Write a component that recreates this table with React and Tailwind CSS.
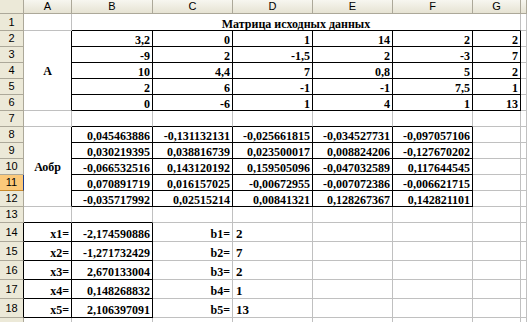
import React from "react";

const matrix = [
  ["3,2", "0", "1", "14", "2", "2"],
  ["-9", "2", "-1,5", "2", "-3", "7"],
  ["10", "4,4", "7", "0,8", "5", "2"],
  ["2", "6", "-1", "-1", "7,5", "1"],
  ["0", "-6", "1", "4", "1", "13"],
];

const inverse = [
  ["0,045463886", "-0,131132131", "-0,025661815", "-0,034527731", "-0,097057106"],
  ["0,030219395", "0,038816739", "0,023500017", "0,008824206", "-0,127670202"],
  ["-0,066532516", "0,143120192", "0,159505096", "-0,047032589", "0,117644545"],
  ["0,070891719", "0,016157025", "-0,00672955", "-0,007072386", "-0,006621715"],
  ["-0,035717992", "0,02515214", "0,00841321", "0,128267367", "0,142821101"],
];

const xs = ["-2,174590886", "-1,271732429", "2,670133004", "0,148268832", "2,106397091"];
const bs = ["2", "7", "2", "1", "13"];

const cols = ["A", "B", "C", "D", "E", "F", "G", ""];

const grid = "border-r border-b border-[#c0c0c0]";
const boxed = "border-r border-b border-black";
const num = "flex items-end justify-end pr-[2px] text-[12px] font-bold leading-none";

// row number on the left
const RowHead = ({ n, active, dark }) => (
  <div
    className={`flex items-center justify-center border-b text-[11px] leading-none ${
      active
        ? "bg-[#fbc97a] border-b-[#c98a2c] border-r border-r-[#1b3c8c]"
        : dark
        ? "bg-[#ece9d8] border-b-[#aca899] border-r border-r-black"
        : "bg-[#ece9d8] border-b-[#aca899] border-r border-r-[#aca899]"
    }`}
    style={{ fontFamily: "'Liberation Sans', Arial, sans-serif" }}
  >
    {n}
  </div>
);

const Empty = ({ className = grid }) => <div className={className} />;

export default function App() {
  return (
    <div
      className="w-[527px] h-[322px] overflow-hidden bg-white text-black"
      style={{ fontFamily: "'Liberation Serif', 'Times New Roman', serif" }}
    >
      <div className="grid grid-cols-[24px_48px_81px_80px_80px_80px_80px_48px_1fr] grid-rows-[14px_17px_repeat(12,16px)_repeat(5,19px)_16px]">
        {/* column headers */}
        <div className="bg-[#ece9d8] border-r border-b border-[#aca899]" />
        {cols.map((c, i) => (
          <div
            key={i}
            className="flex items-center justify-center bg-gradient-to-b from-[#f7f6f0] to-[#e6e3d3] border-r border-b border-[#aca899] text-[11px] leading-none"
            style={{ fontFamily: "'Liberation Sans', Arial, sans-serif" }}
          >
            {c}
          </div>
        ))}

        {/* row 1 */}
        <RowHead n={1} />
        <Empty />
        <div className="col-span-6 flex items-end justify-center border-r border-r-[#c0c0c0] border-b border-b-black text-[12px] font-bold leading-none">
          Матрица исходных данных
        </div>
        <Empty />

        {/* rows 2-6 : matrix A */}
        {matrix.map((row, r) => (
          <React.Fragment key={r}>
            <RowHead n={r + 2} />
            {r === 0 && (
              <div className="row-span-5 flex items-center justify-center border-r border-r-black border-b border-b-[#c0c0c0] text-[12px] font-bold leading-none">
                А
              </div>
            )}
            {row.map((v, i) => (
              <div key={i} className={`${boxed} ${num}`}>
                {v}
              </div>
            ))}
            <Empty />
          </React.Fragment>
        ))}

        {/* row 7 */}
        <RowHead n={7} />
        <Empty />
        <Empty className="border-r border-r-[#c0c0c0] border-b border-b-black" />
        <Empty className="border-r border-r-[#c0c0c0] border-b border-b-black" />
        <Empty className="border-r border-r-[#c0c0c0] border-b border-b-black" />
        <Empty className="border-r border-r-[#c0c0c0] border-b border-b-black" />
        <Empty className="border-r border-r-[#c0c0c0] border-b border-b-black" />
        <Empty />
        <Empty />

        {/* rows 8-12 : inverse */}
        {inverse.map((row, r) => (
          <React.Fragment key={r}>
            <RowHead n={r + 8} active={r === 3} />
            {r === 0 && (
              <div className="row-span-5 flex items-center justify-center border-r border-r-black border-b border-b-[#c0c0c0] text-[12px] font-bold leading-none">
                Аобр
              </div>
            )}
            {row.map((v, i) => (
              <div key={i} className={`${boxed} ${num}`}>
                {v}
              </div>
            ))}
            <Empty />
            <Empty />
          </React.Fragment>
        ))}

        {/* row 13 */}
        <RowHead n={13} />
        <Empty className="border-r border-r-[#c0c0c0] border-b border-b-black" />
        <Empty className="border-r border-r-[#c0c0c0] border-b border-b-black" />
        <Empty />
        <Empty />
        <Empty />
        <Empty />
        <Empty />
        <Empty />

        {/* rows 14-18 : solution */}
        {xs.map((x, r) => (
          <React.Fragment key={r}>
            <RowHead n={r + 14} dark />
            <div className={`${boxed} ${num} pb-px`}>x{r + 1}=</div>
            <div className={`${boxed} ${num} pb-px`}>{x}</div>
            <div className={`${grid} ${num} pb-px`}>b{r + 1}=</div>
            <div className={`${grid} flex items-end pl-[3px] pb-px text-[13px] font-bold leading-none`}>
              {bs[r]}
            </div>
            <Empty />
            <Empty />
            <Empty />
            <Empty />
          </React.Fragment>
        ))}

        {/* row 19, only its top edge shows */}
        <RowHead n="" />
        <Empty />
        <Empty />
        <Empty />
        <Empty />
        <Empty />
        <Empty />
        <Empty />
        <Empty />
      </div>
    </div>
  );
}
